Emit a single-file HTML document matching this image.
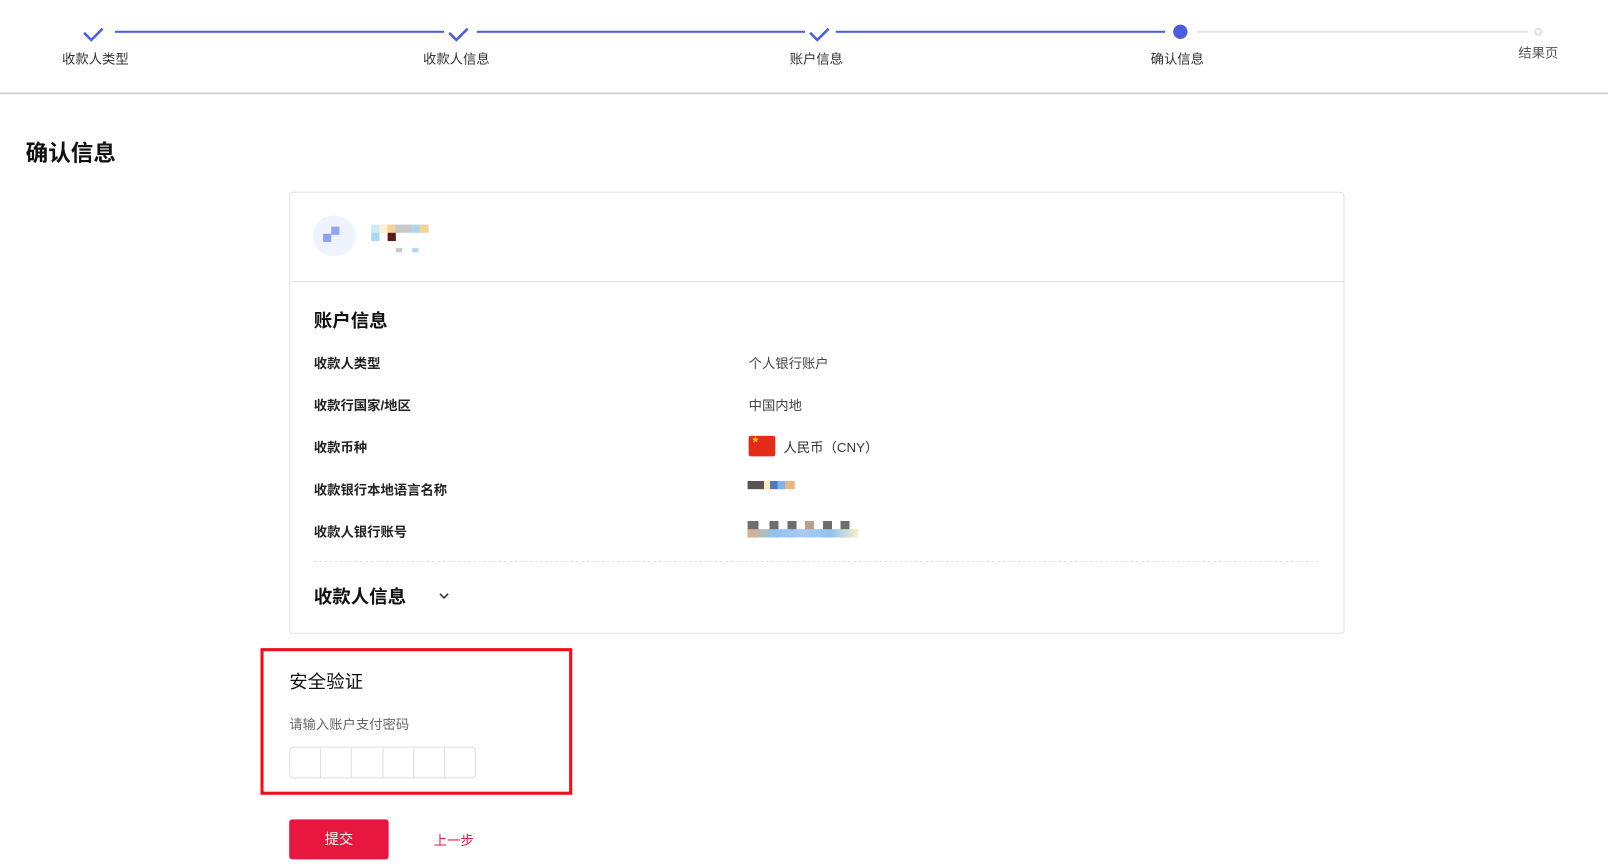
<!DOCTYPE html><html><head><meta charset="utf-8"><style>
*{margin:0;padding:0;box-sizing:border-box}
body{width:1608px;height:866px;background:#fff;font-family:"Liberation Sans","Noto Sans CJK SC",sans-serif;color:#222;position:relative;overflow:hidden}
#w{position:absolute;left:0;top:0;width:1568px;height:845px;transform:scale(1.02551);transform-origin:0 0}
.a{position:absolute}
.lbl{font-size:13px;color:#333;white-space:nowrap;transform:translateX(-50%)}
.ln{height:2px;top:30px}
.k{left:306px;font-size:13px;font-weight:bold;color:#222}
.v{left:730px;font-size:13px;color:#444}
.pix{position:absolute;width:8px;height:8px}
</style></head><body><div id="w">
<div class="a ln" style="left:112px;width:321px;background:#4a5fe0"></div>
<div class="a ln" style="left:465px;width:320px;background:#4a5fe0"></div>
<div class="a ln" style="left:815px;width:321px;background:#4a5fe0"></div>
<div class="a ln" style="left:1167px;width:323px;background:#e4e4e4"></div>
<svg class="a" style="left:80px;top:26px" width="22" height="16"><path d="M2 6 L9 13 L20 2" stroke="#4a5fe0" stroke-width="2.5" fill="none"/></svg>
<svg class="a" style="left:436px;top:26px" width="22" height="16"><path d="M2 6 L9 13 L20 2" stroke="#4a5fe0" stroke-width="2.5" fill="none"/></svg>
<svg class="a" style="left:788px;top:26px" width="22" height="16"><path d="M2 6 L9 13 L20 2" stroke="#4a5fe0" stroke-width="2.5" fill="none"/></svg>
<div class="a" style="left:1144px;top:24px;width:14px;height:14px;border-radius:50%;background:#4a5fe0"></div>
<div class="a" style="left:1496px;top:27px;width:8px;height:8px;border-radius:50%;border:2px solid #e0e0e0"></div>
<div class="a lbl" style="left:93px;top:47px">收款人类型</div>
<div class="a lbl" style="left:445px;top:47px">收款人信息</div>
<div class="a lbl" style="left:796px;top:47px">账户信息</div>
<div class="a lbl" style="left:1148px;top:47px">确认信息</div>
<div class="a lbl" style="left:1500px;top:41px;color:#555">结果页</div>
<div class="a" style="left:0;top:90px;width:1608px;height:2px;background:#d4d4d4"></div>
<div class="a" style="left:25px;top:132px;font-size:22px;font-weight:bold;color:#111">确认信息</div>
<div class="a" style="left:282px;top:187px;width:1029px;height:431px;border:1px solid #e2e2e2;border-radius:3px"></div>
<div class="a" style="left:283px;top:274px;width:1027px;height:1px;background:#e2e2e2"></div>
<div class="a" style="left:305px;top:210px;width:42px;height:40px;border-radius:50%;background:#eef3ff"></div>
<div class="pix" style="left:323px;top:221px;background:#90a4f2"></div>
<div class="pix" style="left:315px;top:228px;background:#90a4f2"></div>
<div class="a" style="left:362px;top:219px;width:56px;height:8px;background:linear-gradient(90deg,#cde9fa 0 14%,#fdf0cc 14% 28%,#f6d19a 28% 42%,#c8c8c8 42% 70%,#a9d8ef 70% 84%,#f6d19a 84%)"></div>
<div class="pix" style="left:362px;top:227px;background:#a9daf5"></div>
<div class="pix" style="left:378px;top:227px;background:#5e1a16"></div>
<div class="a" style="left:386px;top:242px;width:6px;height:4px;background:#c8c8c8"></div>
<div class="a" style="left:402px;top:242px;width:6px;height:4px;background:#a9d8ef"></div>
<div class="a" style="left:306px;top:299px;font-size:18px;font-weight:bold;color:#111">账户信息</div>
<div class="a k" style="top:344px">收款人类型</div><div class="a v" style="top:344px">个人银行账户</div>
<div class="a k" style="top:385px">收款行国家/地区</div><div class="a v" style="top:385px">中国内地</div>
<div class="a k" style="top:426px">收款币种</div>
<div class="a" style="left:730px;top:425px;width:26px;height:20px;background:#e32b17;border-radius:2px;color:#ffde00;font-size:7px;line-height:10px;padding-left:3px">★</div>
<div class="a" style="left:764px;top:426px;font-size:13px;color:#333">人民币（CNY）</div>
<div class="a k" style="top:467px">收款银行本地语言名称</div>
<div class="a" style="left:729px;top:469px;width:46px;height:8px;background:linear-gradient(90deg,#555 0 35%,#fde8b8 35% 47%,#5577bb 47% 63%,#7bb5ea 63% 79%,#e8b783 79%)"></div>
<div class="a k" style="top:508px">收款人银行账号</div>
<div class="a" style="left:729px;top:508px;width:108px;height:16px;background:linear-gradient(90deg,#555 0 10%,#fff 10% 20%,#555 20% 28%,#fff 28% 36%,#555 36% 44%,#fff 44% 52%,#b88c70 52% 60%,#fff 60% 68%,#555 68% 76%,#fff 76% 84%,#555 84% 92%,#fff 92%);opacity:.85"></div>
<div class="a" style="left:729px;top:516px;width:108px;height:8px;background:linear-gradient(90deg,#e0b080,#8fc4ef,#a9c8f0,#8fc4ef,#fbeecb)"></div>
<div class="a" style="left:306px;top:547px;width:980px;border-top:1px dashed #e2e2e2"></div>
<div class="a" style="left:306px;top:568px;font-size:18px;font-weight:bold;color:#111">收款人信息</div>
<svg class="a" style="left:427px;top:576px" width="12" height="10"><path d="M2 3 L6 7 L10 3" stroke="#333" stroke-width="1.5" fill="none"/></svg>
<div class="a" style="left:254px;top:632px;width:304px;height:143px;border:3px solid #f10d1a"></div>
<div class="a" style="left:282px;top:651px;font-size:18px;color:#111">安全验证</div>
<div class="a" style="left:282px;top:696px;font-size:13px;color:#666">请输入账户支付密码</div>
<div class="a" style="left:282px;top:728px;width:182px;height:31px;border:1px solid #ddd;border-radius:4px;display:flex">
<div style="flex:1;border-right:1px solid #ddd"></div><div style="flex:1;border-right:1px solid #ddd"></div><div style="flex:1;border-right:1px solid #ddd"></div><div style="flex:1;border-right:1px solid #ddd"></div><div style="flex:1;border-right:1px solid #ddd"></div><div style="flex:1"></div></div>
<div class="a" style="left:282px;top:799px;width:97px;height:39px;background:#e8173f;border-radius:3px;color:#fff;font-size:14px;text-align:center;line-height:39px">提交</div>
<div class="a" style="left:423px;top:809px;font-size:13px;color:#e8173f">上一步</div>
</div></body></html>
